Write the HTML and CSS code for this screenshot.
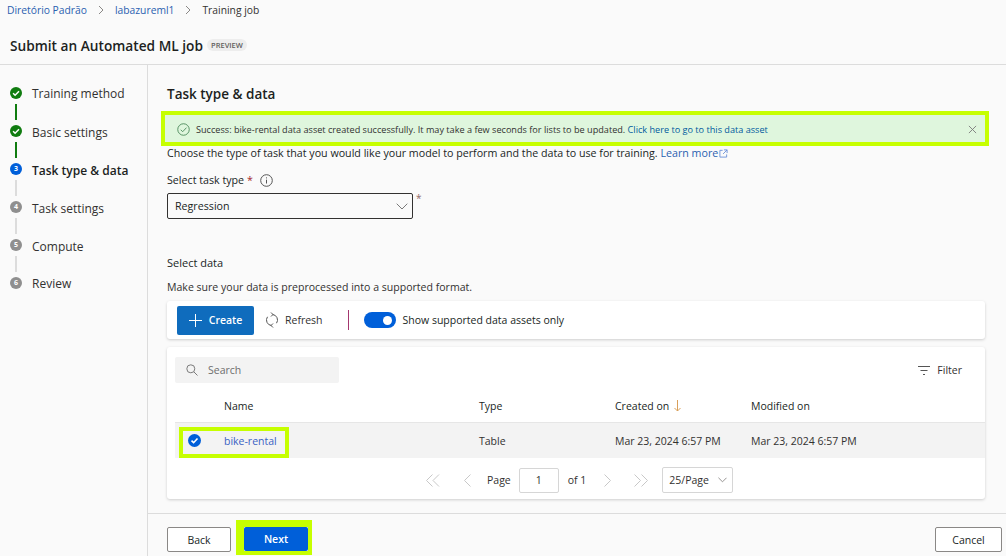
FILE: index.html
```html
<!DOCTYPE html>
<html lang="en">
<head>
<meta charset="utf-8">
<title>Submit an Automated ML job</title>
<link rel="stylesheet" href="styles.css">
</head>
<body>
<div class="page">
  <header class="top">
    <nav class="crumbs">
      <a class="crumb-link">Diretório Padrão</a>
      <svg class="crumb-sep" viewBox="0 0 8 10"><path d="M2 1l4 4-4 4"/></svg>
      <a class="crumb-link">labazureml1</a>
      <svg class="crumb-sep" viewBox="0 0 8 10"><path d="M2 1l4 4-4 4"/></svg>
      <span class="crumb-cur">Training job</span>
    </nav>
    <div class="title-row">
      <h1 class="title">Submit an Automated ML job</h1>
      <span class="preview">PREVIEW</span>
    </div>
  </header>
  <div class="body">
    <aside class="steps">
      <div class="step">
        <div class="marker"><svg class="dot" viewBox="0 0 12 12"><circle cx="6" cy="6" r="6" fill="#107c10"/><path d="M3.100 6.200l2 2 3.900-4" fill="none" stroke="#fff" stroke-width="1.500"/></svg><i class="line line-done"></i></div>
        <span class="step-label step-edge">Training method</span>
      </div>
      <div class="step">
        <div class="marker"><svg class="dot" viewBox="0 0 12 12"><circle cx="6" cy="6" r="6" fill="#107c10"/><path d="M3.100 6.200l2 2 3.900-4" fill="none" stroke="#fff" stroke-width="1.500"/></svg><i class="line line-done"></i></div>
        <span class="step-label">Basic settings</span>
      </div>
      <div class="step">
        <div class="marker"><span class="num num-active">3</span><i class="line"></i></div>
        <span class="step-label step-active">Task type &amp; data</span>
      </div>
      <div class="step">
        <div class="marker"><span class="num">4</span><i class="line"></i></div>
        <span class="step-label">Task settings</span>
      </div>
      <div class="step">
        <div class="marker"><span class="num">5</span><i class="line"></i></div>
        <span class="step-label">Compute</span>
      </div>
      <div class="step">
        <div class="marker"><span class="num">6</span></div>
        <span class="step-label step-edge">Review</span>
      </div>
    </aside>
    <main class="main">
      <div class="content">
        <h2 class="section-title">Task type &amp; data</h2>
        <div class="banner">
          <svg class="banner-icon" viewBox="0 0 14 14"><circle cx="7" cy="7" r="6.200"/><path d="M4 7.300l2.100 2.100L10.200 5"/></svg>
          <span class="banner-text">Success: bike-rental data asset created successfully. It may take a few seconds for lists to be updated. <a class="banner-link">Click here to go to this data asset</a></span>
          <svg class="banner-close" viewBox="0 0 10 10"><path d="M1 1l8 8M9 1l-8 8"/></svg>
        </div>
        <p class="intro">Choose the type of task that you would like your model to perform and the data to use for training. <a class="link">Learn more</a><svg class="ext" viewBox="0 0 10 10"><path d="M4 1.500H1v7.500h7.500V6M5.500 1H9v3.500M9 1L4.500 5.500"/></svg></p>
        <div class="field-label">Select task type <span class="req">*</span>
          <svg class="info" viewBox="0 0 13 13"><circle cx="6.500" cy="6.500" r="5.800"/><path d="M6.500 5.700v3.800M6.500 3.400v1"/></svg>
        </div>
        <div class="select-row">
          <div class="select"><span>Regression</span><svg class="chev" viewBox="0 0 12 7"><path d="M.7.7L6 6l5.300-5.300"/></svg></div>
          <span class="req req-side">*</span>
        </div>
        <h3 class="sub">Select data</h3>
        <p class="help">Make sure your data is preprocessed into a supported format.</p>
        <div class="card toolbar">
          <button class="btn-create"><svg class="plus" viewBox="0 0 13 13"><path d="M6.500 0v13M0 6.500h13"/></svg>Create</button>
          <span class="refresh"><svg class="refresh-icon" viewBox="0 0 12 16"><path d="M6.500 2.500A5.500 5.500 0 0 1 10.500 11.200M5.500 13.500A5.500 5.500 0 0 1 1.500 4.800M5 .5l2 2-2 2M7 11.500l-2 2 2 2"/></svg>Refresh</span>
          <i class="divider"></i>
          <span class="toggle"><i class="knob"></i></span>
          <span class="toggle-label">Show supported data assets only</span>
        </div>
        <div class="card table-card">
          <div class="table-tools">
            <div class="search"><svg class="search-icon" viewBox="0 0 12 12"><circle cx="4.800" cy="4.800" r="4"/><path d="M7.800 7.800L11.500 11.500"/></svg><span>Search</span></div>
            <div class="filter"><svg class="filter-icon" viewBox="0 0 12 9"><path d="M0 .5h12M2.500 4.500h7M5 8.500h2"/></svg>Filter</div>
          </div>
          <div class="tr th">
            <span class="c-name">Name</span>
            <span class="c-type">Type</span>
            <span class="c-date">Created on<svg class="sort" viewBox="0 0 7 12"><path d="M3.500 0v11M.5 8l3 3 3-3"/></svg></span>
            <span class="c-date">Modified on</span>
          </div>
          <div class="tr row">
            <svg class="check" viewBox="0 0 13 13"><circle cx="6.500" cy="6.500" r="6.500" fill="#005fd9"/><path d="M3.500 6.700l2.100 2 3.900-4.200" fill="none" stroke="#fff" stroke-width="1.600"/></svg>
            <a class="c-name link-row">bike-rental</a>
            <span class="c-type">Table</span>
            <span class="c-date">Mar 23, 2024 6:57 PM</span>
            <span class="c-date">Mar 23, 2024 6:57 PM</span>
            <i class="hl-row"></i>
          </div>
          <div class="pager">
            <svg class="pg pg-double" viewBox="0 0 14 13"><path d="M6.500.5l-6 6 6 6M13 .5l-6 6 6 6"/></svg>
            <svg class="pg pg-single" viewBox="0 0 8 13"><path d="M7.500.5l-6 6 6 6"/></svg>
            <span class="pg-text">Page</span>
            <span class="pg-input">1</span>
            <span class="pg-of">of 1</span>
            <svg class="pg pg-next" viewBox="0 0 8 13"><path d="M.5.5l6 6-6 6"/></svg>
            <svg class="pg pg-last" viewBox="0 0 14 13"><path d="M.5.5l6 6-6 6M7.500.5l6 6-6 6"/></svg>
            <span class="pg-size">25/Page<svg class="chev-small" viewBox="0 0 10 6"><path d="M.5.5L5 5 9.500.5"/></svg></span>
          </div>
        </div>
      </div>
      <footer class="footer">
        <button class="btn">Back</button>
        <span class="next-hl"><button class="btn-next">Next</button></span>
        <button class="btn btn-cancel">Cancel</button>
      </footer>
    </main>
  </div>
</div>
</body>
</html>
```
FILE: styles.css
```css
* { box-sizing: border-box; }
html, body { margin: 0; height: 100%; }
body {
  background: #fafafa;
  color: #201f1e;
  font-family: "Open Sans", "Liberation Sans", sans-serif;
  font-size: 11px;
  overflow: hidden;
}
.page { width: 1006px; height: 556px; display: flex; flex-direction: column; }
.top { height: 65px; border-bottom: 1px solid #dcdcdc; padding: 0 0 0 7px; flex: none; }
.crumbs { display: flex; align-items: center; height: 20px; font-size: 10.300px; }
.crumb-link { color: #2a5fb0; }
.crumb-cur { color: #323130; }
.crumb-sep { width: 8px; height: 10px; margin: 0 10px; fill: none; stroke: #8a8886; stroke-width: 1; }
.title-row { display: flex; align-items: center; height: 30px; margin-top: 10px; padding-left: 3px; }
.title { margin: 0; font-size: 13.700px; font-weight: 600; color: #201f1e; }
.preview { margin-left: 4px; width: 40px; text-align: center; background: #ededed; color: #605e5c; font-size: 7.500px; font-weight: 600; border-radius: 6px; line-height: 12px; }
.body { flex: 1; display: flex; min-height: 0; }
.steps { width: 148px; flex: none; border-right: 1px solid #dcdcdc; padding: 22px 0 0 10px; }
.step { display: flex; height: 38px; }
.marker { width: 12px; display: flex; flex-direction: column; align-items: center; flex: none; }
.dot { width: 12px; height: 12px; flex: none; display: block; }
.num { width: 12px; height: 12px; border-radius: 50%; background: #8f8f8f; color: #fff; font-size: 7px; font-weight: 700; line-height: 12px; text-align: center; flex: none; }
.num-active { background: #005fd9; }
.line { width: 2px; height: 16px; margin-top: 5px; background: #dcdcdc; }
.line-done { background: #107c10; }
.step-label { margin-left: 10px; font-size: 12px; line-height: 15px; color: #323130; }
.step-edge { margin-top: -1px; }
.step-active { color: #201f1e; font-weight: 600; }
.main { flex: 1; display: flex; flex-direction: column; min-width: 0; }
.content { flex: 1; padding: 0 21px 0 19px; border-bottom: 1px solid #dcdcdc; }
.section-title { margin: 20px 0 0; font-size: 13.500px; line-height: 18px; font-weight: 600; color: #201f1e; }
.banner { margin: 8px 0 0 -6px; width: 828px; height: 35px; border: 4px solid #c6ff00; background: #dff6dd; display: flex; align-items: center; padding: 1px 8px 0 12px; }
.banner-icon { width: 13px; height: 13px; fill: none; stroke: #4e8a5c; stroke-width: 1; flex: none; }
.banner-text { margin-left: 6px; font-size: 9.130px; color: #323130; flex: 1; white-space: nowrap; }
.banner-link { color: #005a9e; }
.banner-close { width: 9px; height: 9px; fill: none; stroke: #7a7a7a; stroke-width: 1; flex: none; }
.intro { margin: 0; height: 15px; line-height: 15px; font-size: 10.680px; color: #201f1e; display: flex; align-items: center; white-space: pre; }
.link { color: #2a5fb0; }
.ext { width: 9px; height: 9px; margin-left: 1px; fill: none; stroke: #6a8fd8; stroke-width: 1; }
.field-label { margin-top: 11px; height: 16px; line-height: 16px; font-size: 10.680px; color: #201f1e; display: flex; align-items: center; white-space: pre; }
.req { color: #a4262c; }
.info { width: 13px; height: 13px; margin-left: 7px; fill: none; stroke: #555; stroke-width: 1; }
.select-row { display: flex; margin-top: 5px; }
.select { width: 246px; height: 26px; border: 1px solid #323130; border-radius: 2px; display: flex; align-items: center; justify-content: space-between; padding: 0 4px 0 7px; font-size: 10.680px; background: #fafafa; }
.chev { width: 12px; height: 7px; fill: none; stroke: #7a7a7a; stroke-width: 1; }
.req-side { margin-left: 3px; font-size: 10px; line-height: 10px; color: #8f6a6a; }
.sub { margin: 36px 0 0; font-size: 11px; line-height: 15px; font-weight: 400; color: #201f1e; }
.help { margin: 10px 0 0; font-size: 10.550px; line-height: 15px; color: #323130; }
.card { background: #fff; border-radius: 3px; box-shadow: 0 1px 3px rgba(0,0,0,.18); width: 818px; }
.toolbar { margin-top: 6px; height: 38px; display: flex; align-items: center; padding-left: 10px; font-size: 10.500px; }
.btn-create { width: 77px; height: 29px; border: 0; border-radius: 2px; background: #0f6cbd; color: #fff; font: 600 10.500px "Open Sans", sans-serif; display: flex; align-items: center; justify-content: center; gap: 7px; padding: 0; }
.plus { width: 13px; height: 13px; fill: none; stroke: #fff; stroke-width: 1; }
.refresh { display: flex; align-items: center; margin-left: 12px; color: #323130; gap: 7px; }
.refresh-icon { width: 12px; height: 16px; fill: none; stroke: #555; stroke-width: 1; }
.divider { width: 1px; height: 20px; background: #a4376f; margin-left: 25px; }
.toggle { width: 32px; height: 16px; border-radius: 8px; background: #005fd9; margin-left: 15px; display: flex; justify-content: flex-end; align-items: center; padding-right: 4px; }
.knob { width: 9px; height: 9px; border-radius: 50%; background: #fff; display: block; }
.toggle-label { margin-left: 7px; color: #201f1e; }
.table-card { margin-top: 8px; height: 152px; }
.table-tools { display: flex; justify-content: space-between; align-items: center; height: 46px; padding: 0 23px 0 8px; }
.search { width: 164px; height: 26px; background: #f3f3f3; border-radius: 2px; display: flex; align-items: center; padding-left: 11px; color: #6e6e6e; font-size: 10.500px; gap: 10px; }
.search-icon { width: 12px; height: 12px; fill: none; stroke: #7a7a7a; stroke-width: 1; }
.filter { display: flex; align-items: center; gap: 7px; font-size: 10.500px; color: #323130; }
.filter-icon { width: 12px; height: 9px; fill: none; stroke: #555; stroke-width: 1; }
.tr { display: flex; align-items: center; position: relative; font-size: 10.500px; color: #323130; margin-left: 8px; }
.th { height: 30px; padding-bottom: 4px; border-bottom: 1px solid #e6e6e6; color: #201f1e; }
.row { height: 35px; background: #f3f3f3; }
.c-name { position: absolute; left: 49px; }
.c-type { position: absolute; left: 304px; }
.c-date { width: 136px; }
.c-type + .c-date { margin-left: 440px; }
.link-row { color: #3a62c4; }
.sort { width: 7px; height: 12px; margin-left: 5px; fill: none; stroke: #d9a05b; stroke-width: 1; vertical-align: -2px; }
.check { position: absolute; left: 13px; width: 13px; height: 13px; }
.hl-row { position: absolute; left: 4px; top: 4px; width: 110px; height: 31px; border: 4px solid #c6ff00; }
.pager { display: flex; align-items: center; height: 41px; padding: 3px 0 0 259px; font-size: 10.500px; color: #323130; }
.pg { height: 13px; fill: none; stroke: #c8c8c8; stroke-width: 1; flex: none; }
.pg-double { width: 14px; }
.pg-single { width: 8px; margin-left: 23px; }
.pg-text { margin-left: 16px; }
.pg-input { width: 40px; height: 25px; border: 1px solid #d6d6d6; border-radius: 2px; margin-left: 8px; display: flex; align-items: center; justify-content: center; }
.pg-of { margin-left: 9px; }
.pg-next { width: 8px; margin-left: 18px; }
.pg-last { width: 14px; margin-left: 22px; }
.pg-size { width: 71px; height: 26px; border: 1px solid #d6d6d6; border-radius: 2px; margin-left: 14px; display: flex; align-items: center; justify-content: space-between; padding: 0 5px 0 6px; }
.chev-small { width: 9px; height: 6px; fill: none; stroke: #8a8886; stroke-width: 1; }
.footer { height: 42px; flex: none; display: flex; align-items: flex-start; padding: 6px 4px 0 19px; }
.btn { height: 25px; width: 64px; margin-top: 7px; border: 1px solid #8a8886; border-radius: 2px; background: #fff; color: #201f1e; font: 10.500px "Open Sans", sans-serif; padding: 0; }
.next-hl { border: 4px solid #c6ff00; border-left-width: 8px; border-top-width: 7px; width: 76px; height: 35px; margin-left: 5px; display: block; }
.btn-next { display: block; width: 64px; height: 24px; border: 0; border-radius: 2px; background: #005fd9; color: #fff; font: 600 10.500px "Open Sans", sans-serif; padding: 0; }
.btn-cancel { margin-left: auto; width: 67px; }
```
